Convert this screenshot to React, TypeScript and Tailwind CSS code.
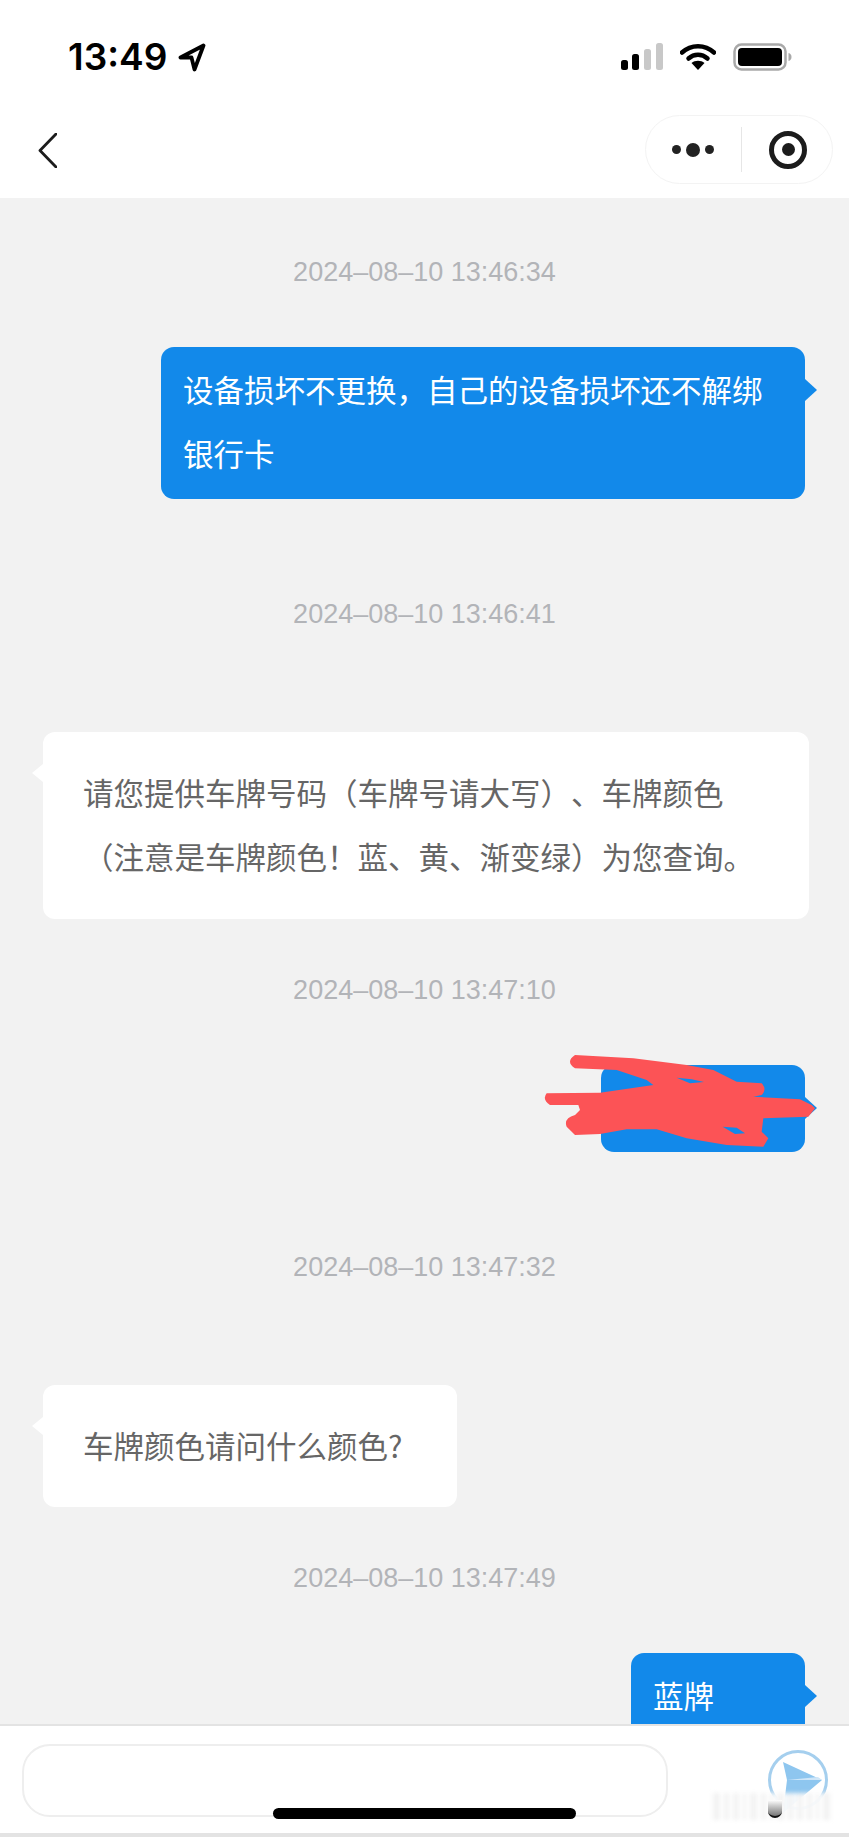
import React from "react";
import { FC, PropsWithChildren } from "react";

const CJK = "font-['Noto_Sans_CJK_SC','Liberation_Sans',sans-serif] [text-spacing-trim:space-all]";

const Stamp: FC<{ time: string; className: string }> = ({ time, className }) => (
  <div
    className={`text-center text-[27px] leading-[30px] text-[#b2b4b8] font-['Liberation_Sans',sans-serif] ${className}`}
  >
    {time}
  </div>
);

const Sent: FC<PropsWithChildren<{ className?: string }>> = ({ children, className = "" }) => (
  <div className={`relative ml-auto mr-[44px] rounded-[13px] bg-[#1289ea] text-white ${className}`}>
    <div className="absolute top-[32px] right-[-12px] h-0 w-0 border-y-[11px] border-l-[12px] border-y-transparent border-l-[#1289ea]" />
    {children}
  </div>
);

const Received: FC<PropsWithChildren<{ className?: string }>> = ({ children, className = "" }) => (
  <div className={`relative ml-[43px] rounded-[12px] bg-white text-[#666666] ${className}`}>
    <div className="absolute top-[32px] left-[-11px] h-0 w-0 border-y-[9px] border-r-[11px] border-y-transparent border-r-white" />
    {children}
  </div>
);

const StatusBar = () => (
  <div className="flex h-[115px] items-start pt-[38px] pl-[68px] pr-[57px]">
    <span className="text-[37px] leading-[38px] font-semibold text-black font-['Inter',sans-serif]">
      13:49
    </span>
    <svg className="ml-[11px] mt-[5px]" width="28" height="29" viewBox="0 0 28 29" fill="none">
      <path d="M25.500 2.500 2.500 14.500h11l3 12z" stroke="#000" strokeWidth="3.800" strokeLinejoin="round" />
    </svg>
    <div className="ml-auto flex items-start gap-[17px] pt-[5px]">
      <svg width="42" height="27" viewBox="0 0 42 27">
        <rect x="0" y="17" width="7" height="10" rx="2.500" fill="#000" />
        <rect x="11" y="11" width="7" height="16" rx="2.500" fill="#000" />
        <rect x="23" y="6" width="7" height="21" rx="2.500" fill="#c8c8c8" />
        <rect x="35" y="0" width="7" height="27" rx="2.500" fill="#c8c8c8" />
      </svg>
      <svg width="36" height="27" viewBox="0 0 36 27" fill="none">
        <path d="M2 9.500C11 1 25 1 34 9.500" stroke="#000" strokeWidth="4.500" strokeLinecap="round" />
        <path d="M8.500 15.500c5.500-5 13.500-5 19 0" stroke="#000" strokeWidth="4.500" strokeLinecap="round" />
        <path d="M18 27l-6.500-7c3.500-3 9.500-3 13 0z" fill="#000" />
      </svg>
      <svg width="59" height="28" viewBox="0 0 59 28" fill="none">
        <rect x="1.500" y="1.500" width="51" height="25" rx="7" stroke="#a9a9a9" strokeWidth="2.500" />
        <rect x="5" y="5" width="44" height="18" rx="4" fill="#000" />
        <path d="M55.500 10c2 .5 3 2 3 4s-1 3.500-3 4z" fill="#a9a9a9" />
      </svg>
    </div>
  </div>
);

const NavBar = () => (
  <div className="flex h-[83px] items-start justify-between pl-[38px] pr-[16px]">
    <svg className="mt-[18px]" width="19" height="35" viewBox="0 0 19 35" fill="none">
      <path d="M18 1 2 17.500 18 34" stroke="#1c1c1c" strokeWidth="2.800" strokeLinecap="round" strokeLinejoin="round" />
    </svg>
    <div className="flex h-[69px] w-[188px] items-center rounded-[35px] border border-[#f3f3f3]">
      <div className="flex w-[95px] items-center justify-end gap-[5px] pr-[27px]">
        <span className="h-[9px] w-[9px] rounded-full bg-[#222]" />
        <span className="h-[14px] w-[14px] rounded-full bg-[#222]" />
        <span className="h-[9px] w-[9px] rounded-full bg-[#222]" />
      </div>
      <div className="h-[45px] w-px bg-[#e6e6e6]" />
      <div className="ml-[27px] flex h-[38px] w-[38px] items-center justify-center rounded-full border-[5px] border-[#1c1c1c]">
        <span className="h-[13px] w-[13px] rounded-full bg-[#1c1c1c]" />
      </div>
    </div>
  </div>
);

// the red marker over the third message, traced on a 3x grid
const Scribble = () => (
  <svg
    className="absolute left-[-101px] top-[-35px]"
    width="349"
    height="150"
    viewBox="0 0 1047 450"
    fill="none"
  >
    <path
      d="M225 75 400 85 560 105 640 120 710 155 785 160Q802 178 785 195L760 200 900 208 935 225 945 235 925 260 790 265 785 305 805 325 790 350 680 345 560 325 470 298 380 298 300 312 225 315 200 290Q190 265 225 255L240 240 235 225 150 225Q125 208 140 190L300 188 460 165 440 150 350 120 225 115Q195 95 225 75Z"
      fill="#fc5356"
    />
    <path d="M530 143 575 148 612 156 570 160Z" fill="#1289ea" />
    <path d="M668 290 710 293 735 310 705 312Z" fill="#1289ea" />
  </svg>
);

const SendButton = () => (
  <div className="relative h-[74px] w-[62px] shrink-0">
    <svg className="absolute left-0 top-0" width="62" height="72" viewBox="0 0 62 72" fill="none">
      <circle cx="30" cy="30" r="28.500" stroke="#a5cfee" strokeWidth="3" />
      <path d="M15 12 54 30 15 63 19 30Z" fill="#8ec6ef" />
      <path d="M19 30H54L50 27Z" fill="#cfe6f8" />
    </svg>
    <div className="absolute left-[-55px] top-[43px] flex h-[27px] w-[117px] items-stretch gap-[4px] bg-white/90 blur-[2px]">
      {[10, 6, 8, 5, 9, 7, 4, 10, 6, 8, 7, 5, 9].map((w, i) => (
        <span key={i} className="bg-[#f3f3f3]" style={{ width: w }} />
      ))}
    </div>
    <div className="absolute left-0 top-[50px] h-[18px] w-[14px] rounded-b-[7px] bg-gradient-to-b from-white to-[#777] border-b-2 border-[#111]" />
  </div>
);

export default function App() {
  return (
    <div className={`flex h-[1837px] w-[849px] flex-col overflow-hidden bg-[#f2f2f2] ${CJK}`}>
      <div className="shrink-0 bg-white">
        <StatusBar />
        <NavBar />
      </div>

      <div className="min-h-0 flex-1 overflow-hidden">
        <Stamp time="2024–08–10 13:46:34" className="pt-[59px]" />
        <Sent className="mt-[60px] h-[152px] w-[644px] px-[22px] py-[10px] text-[30.500px] leading-[64px]">
          设备损坏不更换，自己的设备损坏还不解绑
          <br />
          银行卡
        </Sent>

        <Stamp time="2024–08–10 13:46:41" className="pt-[100px]" />
        <Received className="mt-[103px] h-[187px] w-[766px] pl-[40px] py-[28px] text-[30.500px] leading-[64px]">
          请您提供车牌号码（车牌号请大写）、车牌颜色
          <br />
          （注意是车牌颜色！蓝、黄、渐变绿）为您查询。
        </Received>

        <Stamp time="2024–08–10 13:47:10" className="pt-[56px]" />
        <Sent className="mt-[60px] h-[87px] w-[204px]">
          <Scribble />
        </Sent>

        <Stamp time="2024–08–10 13:47:32" className="pt-[100px]" />
        <Received className="mt-[103px] h-[122px] w-[414px] pl-[40px] py-[28px] text-[30.500px] leading-[64px]">
          车牌颜色请问什么颜色?
        </Received>

        <Stamp time="2024–08–10 13:47:49" className="pt-[56px]" />
        <Sent className="mt-[60px] h-[88px] w-[174px] px-[22px] py-[10px] text-[30.500px] leading-[64px]">
          蓝牌
        </Sent>
      </div>

      <div className="flex h-[113px] shrink-0 flex-col border-t-[2px] border-[#e3e3e3] bg-white">
        <div className="relative flex flex-1 items-start pl-[22px] pr-[19px] pt-[18px]">
          <div className="h-[73px] w-[646px] rounded-[28px] border-2 border-[#eeeeee]" />
          <div className="ml-auto pt-[6px]">
            <SendButton />
          </div>
          <div className="absolute left-[273px] top-[82px] h-[11px] w-[303px] rounded-full bg-black" />
        </div>
        <div className="h-[4px] bg-[#e3e3e3]" />
      </div>
    </div>
  );
}
